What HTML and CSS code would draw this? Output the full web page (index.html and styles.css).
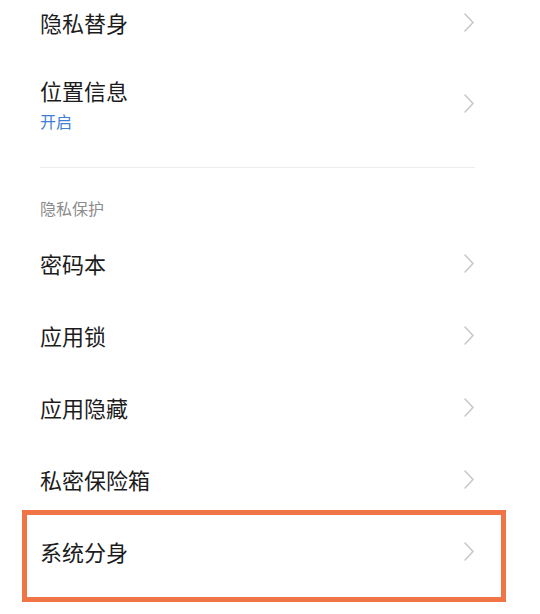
FILE: index.html
```html
<!DOCTYPE html>
<html lang="zh-CN">
<head>
<meta charset="utf-8">
<title>隐私保护</title>
<link rel="stylesheet" href="styles.css">
</head>
<body>
<div class="list">
  <div class="row">
    <div class="text"><div class="title">隐私替身</div></div>
    <svg class="chev" viewBox="0 0 10 19" width="10" height="19"><polyline points="1,1 9,9.5 1,18"/></svg>
  </div>
  <div class="row row-tall">
    <div class="text">
      <div class="title">位置信息</div>
      <div class="sub">开启</div>
    </div>
    <svg class="chev" viewBox="0 0 10 19" width="10" height="19"><polyline points="1,1 9,9.5 1,18"/></svg>
  </div>
  <div class="divider"></div>
  <div class="section">隐私保护</div>
  <div class="row">
    <div class="text"><div class="title">密码本</div></div>
    <svg class="chev" viewBox="0 0 10 19" width="10" height="19"><polyline points="1,1 9,9.5 1,18"/></svg>
  </div>
  <div class="row">
    <div class="text"><div class="title">应用锁</div></div>
    <svg class="chev" viewBox="0 0 10 19" width="10" height="19"><polyline points="1,1 9,9.5 1,18"/></svg>
  </div>
  <div class="row">
    <div class="text"><div class="title">应用隐藏</div></div>
    <svg class="chev" viewBox="0 0 10 19" width="10" height="19"><polyline points="1,1 9,9.5 1,18"/></svg>
  </div>
  <div class="row">
    <div class="text"><div class="title">私密保险箱</div></div>
    <svg class="chev" viewBox="0 0 10 19" width="10" height="19"><polyline points="1,1 9,9.5 1,18"/></svg>
  </div>
  <div class="row row-marked">
    <div class="text"><div class="title">系统分身</div></div>
    <svg class="chev" viewBox="0 0 10 19" width="10" height="19"><polyline points="1,1 9,9.5 1,18"/></svg>
    <div class="highlight"></div>
  </div>
</div>
</body>
</html>
```

FILE: styles.css
```css
html, body {
  margin: 0;
  padding: 0;
  background: #ffffff;
}
body {
  font-family: "Noto Sans CJK SC", "Noto Sans", sans-serif;
  color: #1c1c1c;
  overflow: hidden;
  height: 614px;
}
.list {
  margin-top: -14px;
  padding: 0 66px 0 40px;
}
.row {
  height: 72px;
  display: flex;
  align-items: center;
  justify-content: space-between;
}
.row-tall {
  height: 90px;
}
.text {
  display: flex;
  flex-direction: column;
}
.title {
  font-size: 22px;
  line-height: 30px;
}
.sub {
  font-size: 16px;
  line-height: 22px;
  margin-top: 5px;
  color: #3f7fd6;
}
.chev {
  flex: none;
  display: block;
}
.chev polyline {
  fill: none;
  stroke: #c6c6c6;
  stroke-width: 1.5;
  stroke-linecap: round;
  stroke-linejoin: round;
}
.divider {
  height: 1px;
  background: #ececec;
  margin: 19px 0 0 0;
  width: 435px;
}
.section {
  font-size: 16px;
  line-height: 22px;
  color: #8c8c8c;
  margin: 29px 0 8px 0;
}
.row-marked {
  position: relative;
}
.highlight {
  position: absolute;
  top: -5px;
  bottom: -15px;
  left: -18px;
  right: -32px;
  border: 5px solid #ef7446;
  pointer-events: none;
}
```
